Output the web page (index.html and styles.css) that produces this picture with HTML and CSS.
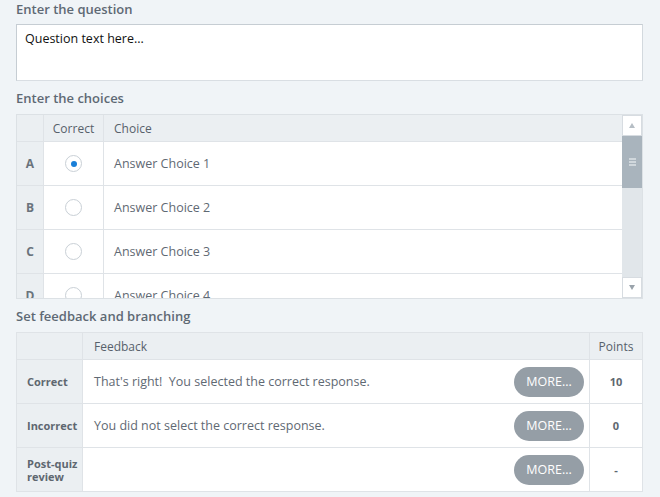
FILE: index.html
```html
<!DOCTYPE html>
<html>
<head>
<meta charset="utf-8">
<link rel="stylesheet" href="styles.css">
</head>
<body>
<div class="page">
  <div class="label first">Enter the question</div>
  <div class="question">Question text here...</div>

  <div class="label">Enter the choices</div>
  <div class="choices">
    <div class="choices-main">
      <div class="crow head">
        <div class="c-letter"></div>
        <div class="c-correct">Correct</div>
        <div class="c-choice">Choice</div>
      </div>
      <div class="crow">
        <div class="c-letter">A</div>
        <div class="c-correct"><span class="radio checked"></span></div>
        <div class="c-choice">Answer Choice 1</div>
      </div>
      <div class="crow">
        <div class="c-letter">B</div>
        <div class="c-correct"><span class="radio"></span></div>
        <div class="c-choice">Answer Choice 2</div>
      </div>
      <div class="crow">
        <div class="c-letter">C</div>
        <div class="c-correct"><span class="radio"></span></div>
        <div class="c-choice">Answer Choice 3</div>
      </div>
      <div class="crow">
        <div class="c-letter">D</div>
        <div class="c-correct"><span class="radio"></span></div>
        <div class="c-choice">Answer Choice 4</div>
      </div>
    </div>
    <div class="scrollbar">
      <div class="sb-btn"><span class="tri up"></span></div>
      <div class="sb-thumb"><span class="grip"></span><span class="grip"></span><span class="grip"></span></div>
      <div class="sb-track"></div>
      <div class="sb-btn"><span class="tri down"></span></div>
    </div>
  </div>

  <div class="label">Set feedback and branching</div>
  <table class="feedback">
    <tr class="head">
      <td class="f-name"></td>
      <td class="f-text">Feedback</td>
      <td class="f-points">Points</td>
    </tr>
    <tr>
      <td class="f-name">Correct</td>
      <td class="f-text"><div class="fb"><span>That's right!&nbsp; You selected the correct response.</span><span class="more">MORE...</span></div></td>
      <td class="f-points">10</td>
    </tr>
    <tr>
      <td class="f-name">Incorrect</td>
      <td class="f-text"><div class="fb"><span>You did not select the correct response.</span><span class="more">MORE...</span></div></td>
      <td class="f-points">0</td>
    </tr>
    <tr>
      <td class="f-name">Post-quiz review</td>
      <td class="f-text"><div class="fb"><span></span><span class="more">MORE...</span></div></td>
      <td class="f-points">-</td>
    </tr>
  </table>
</div>
</body>
</html>
```
FILE: styles.css
```css
html, body {
  margin: 0;
  padding: 0;
  background: #f0f4f7;
}
body {
  font-family: "Open Sans", "Noto Sans", "Liberation Sans", sans-serif;
  color: #5a6470;
}
.page {
  padding: 0 17px 0 16px;
  display: flex;
  flex-direction: column;
}
.label {
  font-size: 13px;
  line-height: 18px;
  font-weight: 600;
  color: #5e6974;
  margin: 8px 0 7px;
}
.label.first {
  margin: 0 0 6px;
}
.question {
  box-sizing: border-box;
  height: 57px;
  background: #fff;
  border: 1px solid #c6cdd3;
  border-bottom-color: #d9dee3;
  border-right-color: #d3d9de;
  padding: 5px 8px;
  font-size: 12.5px;
  line-height: 18px;
  color: #111;
}
.choices {
  display: flex;
  height: 185px;
  box-sizing: border-box;
  border: 1px solid #dce1e5;
  background: #fff;
  overflow: hidden;
}
.choices-main {
  flex: 1;
  overflow: hidden;
}
.crow {
  display: flex;
  height: 44px;
  border-bottom: 1px solid #dfe3e7;
  box-sizing: border-box;
  font-size: 12.5px;
}
.crow.head {
  height: 27px;
  background: #ebeff2;
  color: #5a6470;
  font-size: 12px;
}
.crow > div {
  display: flex;
  align-items: center;
  box-sizing: border-box;
}
.c-letter {
  width: 27px;
  flex: none;
  justify-content: center;
  background: #ebeff2;
  border-right: 1px solid #dfe3e7;
  font-weight: 700;
  font-size: 12px;
  color: #6a737c;
}
.c-correct {
  width: 60px;
  flex: none;
  justify-content: center;
  border-right: 1px solid #dfe3e7;
}
.c-choice {
  flex: 1;
  padding-left: 10px;
  color: #5f6973;
}
.head .c-choice, .head .c-correct { color: #57616b; }
.radio {
  width: 17px;
  height: 17px;
  border-radius: 50%;
  border: 1px solid #c9d0d6;
  box-sizing: border-box;
  background: #fff;
  display: flex;
  align-items: center;
  justify-content: center;
}
.radio.checked::after {
  content: "";
  width: 6px;
  height: 6px;
  border-radius: 50%;
  background: #1a7fd8;
}
.scrollbar {
  width: 20px;
  flex: none;
  display: flex;
  flex-direction: column;
  background: #e1e6ea;
}
.sb-btn {
  height: 21px;
  box-sizing: border-box;
  background: #fff;
  border: 1px solid #d7dce1;
  display: flex;
  align-items: center;
  justify-content: center;
}
.sb-thumb {
  height: 52px;
  background: #a9b4bd;
  display: flex;
  flex-direction: column;
  align-items: center;
  justify-content: center;
  gap: 1px;
}
.grip {
  width: 7px;
  height: 2px;
  background: #d0d7dc;
}
.sb-track {
  flex: 1;
}
.tri {
  width: 0;
  height: 0;
  border-left: 3px solid transparent;
  border-right: 3px solid transparent;
}
.tri.up { border-bottom: 5px solid #b6bec5; }
.tri.down { border-top: 5px solid #9aa3ab; }
.feedback {
  border-collapse: collapse;
  width: 100%;
  background: #fff;
  font-size: 12.5px;
}
.feedback td {
  border: 1px solid #dfe3e7;
  padding: 0;
  height: 43px;
  vertical-align: middle;
}
.feedback tr.head td {
  height: 26px;
  background: #ebeff2;
  color: #57616b;
  font-size: 12px;
}
.f-name {
  width: 66px;
  background: #ebeff2;
  font-weight: 700;
  font-size: 11px;
  line-height: 13px;
  padding-left: 10px !important;
  box-sizing: border-box;
  color: #5e6770;
}
.f-text {
  padding-left: 11px !important;
  color: #5f6973;
}
.fb {
  display: flex;
  align-items: center;
  justify-content: space-between;
  padding-right: 5px;
}
.more {
  width: 70px;
  height: 30px;
  border-radius: 15px;
  background: #959ea6;
  color: #fff;
  font-size: 12.5px;
  display: flex;
  align-items: center;
  justify-content: center;
}
.f-points {
  width: 52px;
  text-align: center;
  font-weight: 700;
  font-size: 11px;
  color: #5e6770;
}
.head .f-points {
  font-weight: 400;
  font-size: 12px;
}
```
